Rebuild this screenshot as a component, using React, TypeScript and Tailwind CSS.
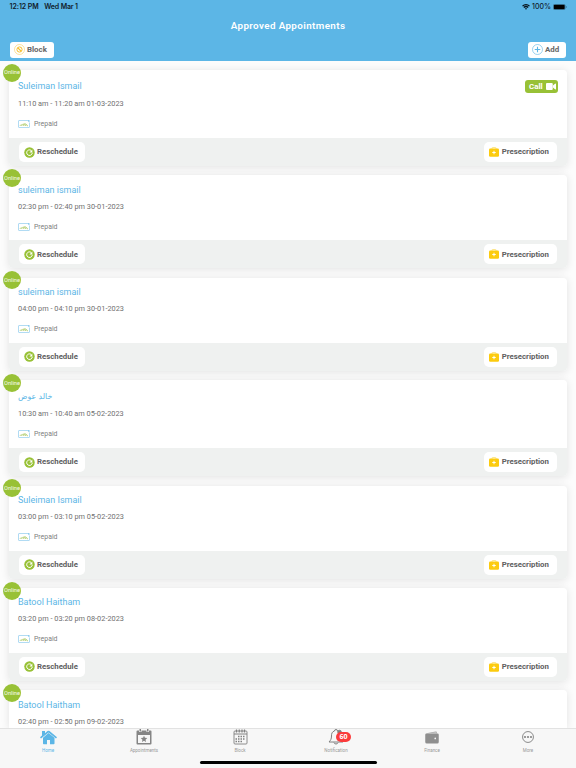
import React from "react";

type Appointment = {
  name: string;
  time: string;
  tall?: boolean;
  call?: boolean;
  arabic?: boolean;
  clipped?: boolean;
};

const appointments: Appointment[] = [
  { name: "Suleiman Ismail", time: "11:10 am - 11:20 am 01-03-2023", tall: true, call: true },
  { name: "suleiman ismail", time: "02:30 pm - 02:40 pm 30-01-2023" },
  { name: "suleiman ismail", time: "04:00 pm - 04:10 pm 30-01-2023" },
  { name: "خالد عوض", time: "10:30 am - 10:40 am 05-02-2023", tall: true, arabic: true },
  { name: "Suleiman Ismail", time: "03:00 pm - 03:10 pm 05-02-2023" },
  { name: "Batool Haitham", time: "03:20 pm - 03:20 pm 08-02-2023" },
  { name: "Batool Haitham", time: "02:40 pm - 02:50 pm 09-02-2023", clipped: true },
];

function StatusBar() {
  return (
    <div className="flex h-[14px] items-center justify-between pl-[9.5px] pr-[9px] font-['Inter',sans-serif] text-[7px] font-semibold leading-[14px] text-[#10202b]">
      <div className="flex gap-[5.5px]">
        <span className="tracking-[-0.05px]">12:12 PM</span>
        <span className="tracking-[-0.15px]">Wed Mar 1</span>
      </div>
      <div className="flex items-center">
        <svg width="8" height="6" viewBox="0 0 16 12" fill="none" stroke="#08141b" strokeWidth="2.6">
          <path d="M1 4.3c4-3.8 10-3.8 14 0M3.6 7.1c2.6-2.4 6.2-2.4 8.8 0" />
          <path d="M5.8 9.2c1.3-1.2 3.1-1.2 4.4 0L8 11.6z" fill="#08141b" stroke="none" />
        </svg>
        <span className="ml-[2px] font-medium">100%</span>
        <svg className="ml-[2px]" width="14" height="6" viewBox="0 0 14 6">
          <rect x="0.25" y="0.25" width="12" height="5.5" rx="1.6" fill="none" stroke="#2b5670" strokeWidth="0.5" />
          <rect x="0.8" y="0.7" width="10.9" height="4.6" rx="1" fill="#000" />
          <path d="M13 2v2c.8-.3.8-1.7 0-2z" fill="#2b5670" />
        </svg>
      </div>
    </div>
  );
}

function Header() {
  return (
    <header className="h-[61px] shrink-0 bg-[#5cb6e6]">
      <StatusBar />
      <h1 className="h-[24px] text-center text-[9.8px] font-semibold leading-[24px] tracking-[0.4px] text-white">
        Approved Appointments
      </h1>
      <div className="flex justify-between px-[10px] pt-[4px]">
        <button className="flex h-[15.5px] w-[43.5px] items-center rounded-[3px] bg-white pl-[3.5px] text-[7.9px] font-bold text-[#666]">
          <svg width="11" height="11" viewBox="0 0 22 22" fill="none" stroke="#f8c02e">
            <circle cx="11" cy="11" r="10" strokeWidth="0.9" />
            <circle cx="11" cy="11" r="5.2" strokeWidth="2" />
            <path d="M7.5 7.5l7 7" strokeWidth="2.2" />
          </svg>
          <span className="ml-[2.5px]">Block</span>
        </button>
        <button className="flex h-[15.5px] w-[38px] items-center rounded-[3px] bg-white pl-[3.5px] text-[7.9px] font-bold text-[#666]">
          <svg width="11" height="11" viewBox="0 0 22 22" fill="none" stroke="#5cb6e6">
            <circle cx="11" cy="11" r="10" strokeWidth="1.2" />
            <path d="M11 5.5v11M5.5 11h11" strokeWidth="2.2" />
          </svg>
          <span className="ml-[2.5px]">Add</span>
        </button>
      </div>
    </header>
  );
}

function PrepaidIcon() {
  return (
    <svg width="12" height="8" viewBox="0 0 24 16" fill="none">
      <path d="M18.5 1H2Q1 1 1 2v12q0 1 1 1h20q1 0 1-1V6" stroke="#8fcbee" strokeWidth="1.4" />
      <path d="M18 0h5v6z" fill="#8fcbee" />
      <path d="M3.5 12l3-3 1 2.5 3-4 1 4 2.5-5 1 5 2-3 1 3h2" stroke="#afca69" strokeWidth="1.5" />
    </svg>
  );
}

function RescheduleIcon() {
  return (
    <svg width="11" height="11" viewBox="0 0 22 22" fill="none">
      <circle cx="11" cy="11" r="10.5" fill="#98c136" />
      <path d="M14 6.6A5.600 5.600 0 1 0 16.600 11.500" stroke="#fff" strokeWidth="2" />
      <path d="M16.600 5v5.800h-5.800z" fill="#fff" />
    </svg>
  );
}

function PrescriptionIcon() {
  return (
    <svg width="10" height="10" viewBox="0 0 20 20" fill="none">
      <path d="M6 4V2q0-1 1-1h6q1 0 1 1v2" stroke="#fbdf70" strokeWidth="1.6" />
      <rect y="3" width="20" height="16.5" rx="2.5" fill="#fccb0f" />
      <path d="M10 7.5v7M6.5 11h7" stroke="#fff" strokeWidth="1.9" />
    </svg>
  );
}

function Card({ item }: { item: Appointment }) {
  return (
    <article
      className={
        item.clipped
          ? "relative flex-1 rounded-t-[4px] bg-white shadow-[0_1px_8px_rgba(0,0,0,0.11)]"
          : "relative shrink-0 rounded-[4px] bg-white shadow-[0_1px_8px_rgba(0,0,0,0.11)]"
      }
    >
      <span className="absolute -left-[6px] -top-[6.3px] flex size-[18px] items-center justify-center rounded-full bg-[#98c136] text-[5.7px] text-white/90">
        Online
      </span>
      <div
        className={
          item.clipped
            ? "px-[9px] pt-[8px]"
            : item.tall
              ? "h-[68px] px-[9px] pt-[8.7px]"
              : "h-[65px] px-[9px] pt-[8px]"
        }
      >
        <div className={item.tall ? "flex h-[15.5px] items-center justify-between" : "flex h-[13.5px] items-center justify-between"}>
          <h2
            className={
              item.arabic
                ? "font-['DejaVu_Sans',sans-serif] text-[7.8px] leading-[13px] text-[#5cb6e6]"
                : "text-[9px] leading-[13px] text-[#5cb6e6]"
            }
          >
            {item.name}
          </h2>
          {item.call && (
            <button className="flex h-[13.5px] w-[33px] items-center rounded-[3px] bg-[#98c136] pl-[4px] text-[7.9px] font-bold text-white">
              Call
              <svg className="ml-[3px]" width="10" height="7" viewBox="0 0 20 14" fill="#fff">
                <rect width="13.5" height="14" rx="2" />
                <path d="M14 5l4-3.5q2-1 2 .5v10q0 1.5-2 .5l-4-3.5z" />
              </svg>
            </button>
          )}
        </div>
        <p className="mt-[4px] h-[11px] text-[7.35px] leading-[11px] text-[#707070]">{item.time}</p>
        {!item.clipped && (
          <div className="mt-[9.3px] flex h-[11px] items-center text-[6.9px] text-[#808080]">
            <PrepaidIcon />
            <span className="ml-[4px] pt-[0.7px]">Prepaid</span>
          </div>
        )}
      </div>
      {!item.clipped && (
        <footer className="flex h-[28px] items-center justify-between rounded-b-[4px] bg-[#eff1f0] px-[10px] text-[7.8px] font-bold text-[#606060]">
          <button className="flex h-[20px] w-[66px] items-center rounded-[5px] bg-white pl-[4.5px]">
            <RescheduleIcon />
            <span className="ml-[2.5px]">Reschedule</span>
          </button>
          <button className="flex h-[20px] w-[73px] items-center rounded-[5px] bg-white pl-[5px]">
            <PrescriptionIcon />
            <span className="ml-[2.8px] text-[7.8px]">Presecription</span>
          </button>
        </footer>
      )}
    </article>
  );
}

function HomeIcon() {
  return (
    <svg width="17" height="15" viewBox="0 0 34 30" fill="#5cb6e6">
      <path d="M4 2h6v4.500L15 2q2-1.500 4 0l15 12.500-2 2.500L17 5 2 17l-2-2.500L4 11z" />
      <path d="M17 6L29 15.700V27q0 1.500-1.500 1.500H20V20h-6v8.500H7.500Q6 28.500 6 27V15.700z" />
    </svg>
  );
}

function AppointmentsIcon() {
  return (
    <svg width="16" height="16" viewBox="0 0 32 32" fill="#858585">
      <path fillRule="evenodd" d="M3 3h3v3h5V3h10v3h5V3h3q2 0 2 2v24q0 2-2 2H3q-2 0-2-2V5q0-2 2-2zm1 9v16h24V12z" />
      <rect x="7" width="3" height="5" />
      <rect x="22" width="3" height="5" />
      <path d="M16 13.5l1.900 4.200 4.600.5-3.400 3.100.9 4.600-4-2.300-4 2.300.9-4.600-3.400-3.100 4.600-.5z" />
    </svg>
  );
}

function BlockIcon() {
  return (
    <svg width="15" height="16" viewBox="0 0 30 32" fill="none" stroke="#808080">
      <rect x="2" y="4" width="26" height="26" rx="2" strokeWidth="1.8" />
      <path d="M2 10h26" strokeWidth="2" />
      <path d="M7 1v6M12.5 1v6M18 1v6M23 1v6" strokeWidth="2.4" />
      <path d="M10 15h15M5 20h20M5 25h15" strokeWidth="3" strokeDasharray="3 2" />
    </svg>
  );
}

function BellIcon() {
  return (
    <svg width="16" height="16" viewBox="0 0 32 32" fill="none" stroke="#808080" strokeWidth="2">
      <path d="M13 4a3 3 0 0 1 6 0c5 1.500 6 5 6 10 0 6 2 9 5 12H2c3-3 5-6 5-12 0-5 1-8.500 6-10z" />
      <path d="M12 27c.5 4 7.500 4 8 0" />
      <circle cx="23" cy="6" r="3.5" fill="#808080" />
    </svg>
  );
}

function FinanceIcon() {
  return (
    <svg width="14" height="13" viewBox="0 0 28 26" fill="#8f8f8f">
      <path d="M3 4.5L21 1q3-.5 3 2v2H3z" fill="#aaa" />
      <path fillRule="evenodd" d="M3 5h22q2.500 0 2.500 2.500V22q0 3-3 3H3.500q-3 0-3-3V7.500Q.5 5 3 5zm17.500 8.200a1.600 1.600 0 1 0 0 3.400 1.600 1.600 0 0 0 0-3.400z" />
      <path d="M6 5l17-3v3z" fill="#c4c4c4" />
    </svg>
  );
}

function MoreIcon() {
  return (
    <svg width="12" height="12" viewBox="0 0 24 24" fill="#858585">
      <circle cx="12" cy="12" r="10.9" fill="none" stroke="#858585" strokeWidth="1.9" />
      <circle cx="6" cy="12" r="2.2" />
      <circle cx="12" cy="12" r="2.2" />
      <circle cx="18" cy="12" r="2.2" />
    </svg>
  );
}

const tabs = [
  { label: "Home", icon: <HomeIcon />, active: true },
  { label: "Appointments", icon: <AppointmentsIcon /> },
  { label: "Block", icon: <BlockIcon /> },
  { label: "Notification", icon: <BellIcon />, badge: "60" },
  { label: "Finance", icon: <FinanceIcon /> },
  { label: "More", icon: <MoreIcon /> },
];

function TabBar() {
  return (
    <nav className="z-10 flex h-[40px] shrink-0 flex-col items-center border-t border-[#e2e2e2] bg-[#f7f7f7]">
      <div className="grid h-[31.5px] w-full grid-cols-6">
        {tabs.map((tab) => (
          <div key={tab.label} className="flex flex-col items-center">
            <div className="relative flex h-[16px] items-center">
              {tab.icon}
              {tab.badge && (
                <span className="absolute left-[8px] top-[3px] flex h-[10px] w-[15px] items-center justify-center rounded-full bg-[#fb3b3b] font-['Open_Sans',sans-serif] text-[7px] font-bold text-white">
                  {tab.badge}
                </span>
              )}
            </div>
            <span
              className={
                tab.active
                  ? "mt-[2.5px] text-[4.5px] leading-[6px] text-[#5cb6e6]"
                  : "mt-[2.5px] text-[4.5px] leading-[6px] text-[#999]"
              }
            >
              {tab.label}
            </span>
          </div>
        ))}
      </div>
      <div className="h-[3px] w-[177px] rounded-full bg-black" />
    </nav>
  );
}

export default function App() {
  return (
    <div className="flex h-[768px] w-[576px] flex-col overflow-hidden bg-[#fcfcfc] font-['Roboto',sans-serif]">
      <Header />
      <main className="flex min-h-0 flex-1 flex-col gap-[9.4px] overflow-hidden px-[9px] pt-[9px]">
        {appointments.map((item, i) => (
          <Card key={i} item={item} />
        ))}
      </main>
      <TabBar />
    </div>
  );
}
